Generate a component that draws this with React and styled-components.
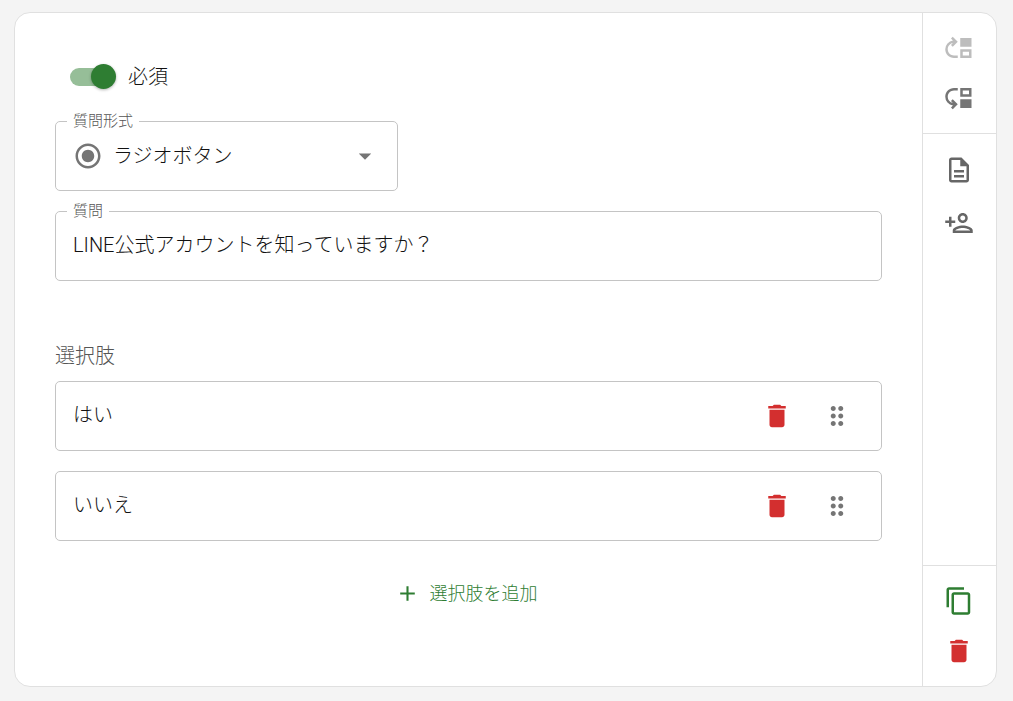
import React, { useState } from "react";
import styled, { createGlobalStyle } from "styled-components";
import {
  MdAdd,
  MdArrowDropDown,
  MdContentCopy,
  MdDelete,
  MdDragIndicator,
  MdMoveDown,
  MdMoveUp,
  MdOutlineDescription,
  MdOutlinePersonAdd,
  MdRadioButtonChecked,
} from "react-icons/md";

const App = () => {
  const [required, setRequired] = useState(true);
  const [type, setType] = useState("radio");
  const [question, setQuestion] = useState(
    "LINE公式アカウントを知っていますか？"
  );
  const [choices, setChoices] = useState([
    { id: 1, text: "はい" },
    { id: 2, text: "いいえ" },
  ]);

  const handleChange = (id, text) => {
    setChoices(choices.map((c) => (c.id === id ? { ...c, text } : c)));
  };

  const handleDelete = (id) => {
    setChoices(choices.filter((c) => c.id !== id));
  };

  const handleAdd = () => {
    setChoices([...choices, { id: Date.now(), text: "" }]);
  };

  return (
    <Page>
      <GlobalStyle />
      <Card>
        <Main>
          <SwitchLabel>
            <Switch
              type="checkbox"
              role="switch"
              checked={required}
              onChange={(e) => setRequired(e.target.checked)}
            />
            必須
          </SwitchLabel>

          <Fields>
            <Field $narrow>
              <FieldLabel htmlFor="type">質問形式</FieldLabel>
              <MdRadioButtonChecked size={30} />
              <Select
                id="type"
                value={type}
                onChange={(e) => setType(e.target.value)}
              >
                <option value="radio">ラジオボタン</option>
              </Select>
              <MdArrowDropDown size={30} />
            </Field>
            <Field>
              <FieldLabel htmlFor="question">質問</FieldLabel>
              <Input
                id="question"
                type="text"
                value={question}
                onChange={(e) => setQuestion(e.target.value)}
              />
            </Field>
          </Fields>

          <ChoicesTitle id="choices">選択肢</ChoicesTitle>
          <Fields>
            {choices.map((choice) => (
              <Field key={choice.id}>
                <Input
                  type="text"
                  aria-labelledby="choices"
                  value={choice.text}
                  onChange={(e) => handleChange(choice.id, e.target.value)}
                />
                <Actions>
                  <IconButton
                    type="button"
                    $color="#d32f2f"
                    aria-label="削除"
                    onClick={() => handleDelete(choice.id)}
                  >
                    <MdDelete size={30} />
                  </IconButton>
                  <IconButton type="button" aria-label="並べ替え">
                    <MdDragIndicator size={30} />
                  </IconButton>
                </Actions>
              </Field>
            ))}
          </Fields>

          <AddButton type="button" onClick={handleAdd}>
            <MdAdd size={25} />
            選択肢を追加
          </AddButton>
        </Main>

        <Sidebar>
          <Group>
            <IconButton type="button" aria-label="上へ移動" disabled>
              <MdMoveUp size={30} />
            </IconButton>
            <IconButton type="button" aria-label="下へ移動">
              <MdMoveDown size={30} />
            </IconButton>
          </Group>
          <Group $grow>
            <IconButton type="button" $color="#666666" aria-label="説明">
              <MdOutlineDescription size={30} />
            </IconButton>
            <IconButton type="button" $color="#666666" aria-label="追加">
              <MdOutlinePersonAdd size={30} />
            </IconButton>
          </Group>
          <Group>
            <IconButton type="button" $color="#2e7d32" aria-label="複製">
              <MdContentCopy size={30} />
            </IconButton>
            <IconButton type="button" $color="#d32f2f" aria-label="質問を削除">
              <MdDelete size={30} />
            </IconButton>
          </Group>
        </Sidebar>
      </Card>
    </Page>
  );
};

export default App;

const GlobalStyle = createGlobalStyle`
  * {
    box-sizing: border-box;
  }

  body {
    margin: 0;
    background: #f4f4f4;
    color: #111111;
    font-family: Roboto, "Noto Sans CJK JP", sans-serif;
    font-size: 20px;
    font-weight: 300;
    line-height: 30px;
  }

  button,
  input,
  select {
    font: inherit;
    color: inherit;
  }
`;

const Page = styled.div`
  padding: 12px 16px 14px 14px;
`;

const Card = styled.div`
  display: flex;
  background: white;
  border: 1px solid #e0e0e0;
  border-radius: 16px;
  overflow: hidden;
`;

const Main = styled.div`
  flex: 1;
  min-width: 0;
  padding: 40px 40px 70px;
  display: flex;
  flex-direction: column;
`;

const SwitchLabel = styled.label`
  display: flex;
  align-items: center;
  align-self: flex-start;
  gap: 15px;
  height: 48px;
  margin-bottom: 20px;
  padding-left: 15px;
  cursor: pointer;
`;

const Switch = styled.input`
  appearance: none;
  position: relative;
  width: 43px;
  height: 18px;
  margin: 0;
  border-radius: 9px;
  background: #9e9e9e;
  cursor: pointer;

  &::before {
    content: "";
    position: absolute;
    top: -4px;
    left: -4px;
    width: 25px;
    height: 25px;
    border-radius: 50%;
    background: white;
    box-shadow: 0 1px 3px rgba(0, 0, 0, 0.3);
    transition: left 0.15s ease-in-out;
  }

  &:checked {
    background: #96be98;
  }

  &:checked::before {
    left: 21px;
    background: #2e7d32;
  }
`;

const Fields = styled.div`
  display: flex;
  flex-direction: column;
  gap: 20px;
`;

const Field = styled.div`
  position: relative;
  display: flex;
  align-items: center;
  width: 100%;
  max-width: ${(props) => (props.$narrow ? "343px" : "none")};
  height: 70px;
  padding: 0 17px;
  border: 1px solid #c4c4c4;
  border-radius: 5px;
  color: #757575;
`;

const FieldLabel = styled.label`
  position: absolute;
  top: -11px;
  left: 11px;
  padding: 0 6px;
  background: white;
  color: #555555;
  font-size: 15px;
  line-height: 20px;
`;

const Select = styled.select`
  appearance: none;
  flex: 1;
  min-width: 0;
  height: 50px;
  margin-left: 10px;
  padding: 0;
  border: none;
  outline: none;
  background: transparent;
  color: #111111;
  cursor: pointer;
`;

const Input = styled.input`
  flex: 1;
  min-width: 0;
  height: 50px;
  padding: 0 0 6px;
  border: none;
  outline: none;
  background: transparent;
  color: #111111;
`;

const ChoicesTitle = styled.div`
  margin: 60px 0 10px;
  color: #555555;
`;

const Actions = styled.div`
  display: flex;
  gap: 10px;
  margin-right: 2px;
`;

const IconButton = styled.button`
  display: flex;
  align-items: center;
  justify-content: center;
  width: 50px;
  height: 50px;
  padding: 0;
  border: none;
  border-radius: 50%;
  background: transparent;
  color: ${(props) => props.$color || "#757575"};
  cursor: pointer;

  &:hover {
    background: rgba(0, 0, 0, 0.04);
  }

  &:disabled {
    background: transparent;
    color: #bdbdbd;
    cursor: default;
  }
`;

const AddButton = styled.button`
  display: flex;
  align-items: center;
  align-self: center;
  gap: 10px;
  height: 45px;
  margin-top: 30px;
  padding: 0 15px 0 10px;
  border: none;
  border-radius: 5px;
  background: transparent;
  color: #2e7d32;
  font-size: 18px;
  cursor: pointer;

  &:hover {
    background: rgba(46, 125, 50, 0.04);
  }
`;

const Sidebar = styled.div`
  display: flex;
  flex-direction: column;
  width: 74px;
  border-left: 1px solid #e0e0e0;
`;

const Group = styled.div`
  display: flex;
  flex-direction: column;
  align-items: center;
  flex-grow: ${(props) => (props.$grow ? 1 : 0)};
  gap: ${(props) => (props.$grow ? "3px" : "0")};
  padding: ${(props) => (props.$grow ? "11px" : "10px")} 2px 10px 0;

  & + & {
    border-top: 1px solid #e0e0e0;
  }
`;
